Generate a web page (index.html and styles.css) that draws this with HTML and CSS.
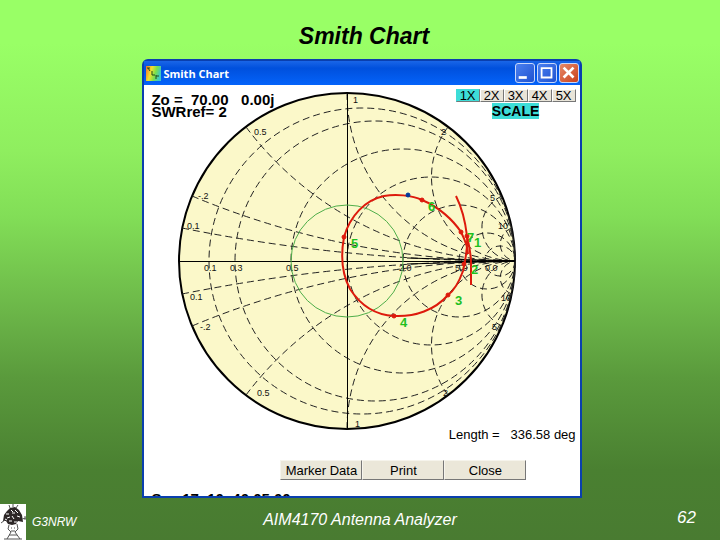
FILE: index.html
```
<!DOCTYPE html>
<html lang="en">

<head>
    <meta charset="UTF-8">
    <meta name="viewport" content="width=device-width, initial-scale=1.0">
    <title>Smith Chart</title>
    <link rel="stylesheet" href="styles.css">
</head>

<body>
    <h1 class="slide-title">Smith Chart</h1>

    <main class="window">
        <header class="titlebar">
            <svg class="app-icon" viewBox="0 0 15 15">
                <defs>
                    <linearGradient id="rainbow" x2="1" y2="0.3">
                        <stop offset="0" stop-color="#f26a2a" />
                        <stop offset="0.4" stop-color="#f2e030" />
                        <stop offset="0.7" stop-color="#7be04a" />
                        <stop offset="1" stop-color="#3fc8c0" />
                    </linearGradient>
                </defs>
                <rect width="15" height="15" fill="url(#rainbow)" />
                <path d="M1 2h3M2 2l2 3M6 5v4h3M10 9v4M10 10h3" fill="none" stroke="#1d4a1d" stroke-width="1" />
            </svg>
            <h2 class="caption">Smith Chart</h2>
            <button class="win-btn" type="button" aria-label="Minimize">
                <svg viewBox="0 0 20 20"><path d="M3 15h9" stroke="#fff" stroke-width="3" /></svg>
            </button>
            <button class="win-btn" type="button" aria-label="Maximize">
                <svg viewBox="0 0 20 20"><path d="M3 4.500h13M4 4v11h11V4" fill="none" stroke="#fff" stroke-width="2" /></svg>
            </button>
            <button class="win-btn close" type="button" aria-label="Close window">
                <svg viewBox="0 0 20 20"><path d="M4 4l11 11M15 4L4 15" stroke="#fff" stroke-width="3" /></svg>
            </button>
        </header>

        <section class="client">
            <div class="readout">
                <p>Zo =&nbsp; 70.00 &nbsp; 0.00j</p>
                <p>SWRref= 2</p>
            </div>

            <div class="scale">
                <div class="scale-btns">
                    <button class="active" type="button">1X</button>
                    <button type="button">2X</button>
                    <button type="button">3X</button>
                    <button type="button">4X</button>
                    <button type="button">5X</button>
                </div>
                <span class="scale-label">SCALE</span>
            </div>

            <svg class="chart" viewBox="0 0 340 340">
                <defs>
                    <clipPath id="disc"><circle cx="170" cy="170" r="168" /></clipPath>
                </defs>
                <circle class="rim" cx="170" cy="170" r="168" />

                <!-- constant resistance: 0.1 0.2 0.5 1 2 5 10 -->
                <g class="grid">
                    <circle cx="185" cy="170" r="153" />
                    <circle cx="198" cy="170" r="140" />
                    <circle cx="226" cy="170" r="112" />
                    <circle cx="254" cy="170" r="84" />
                    <circle cx="282" cy="170" r="56" />
                    <circle cx="310" cy="170" r="28" />
                    <circle cx="323" cy="170" r="15" />
                </g>

                <!-- constant reactance: 0.1 0.2 0.5 1 2 5 10 -->
                <g class="grid" clip-path="url(#disc)">
                    <path d="M5 137A1680 1680 0 0 0 338 170M5 203A1680 1680 0 0 1 338 170" />
                    <path d="M15 105A840 840 0 0 0 338 170M15 235A840 840 0 0 1 338 170" />
                    <path d="M69 36A336 336 0 0 0 338 170M69 304A336 336 0 0 1 338 170" />
                    <path d="M170 2A168 168 0 0 0 338 170M170 338A168 168 0 0 1 338 170" />
                    <path d="M271 36A84 84 0 0 0 338 170M271 304A84 84 0 0 1 338 170" />
                    <path d="M325 105A34 34 0 0 0 338 170M325 235A34 34 0 0 1 338 170" />
                    <path d="M335 137A17 17 0 0 0 338 170M335 203A17 17 0 0 1 338 170" />
                </g>
                <path class="axis" d="M2 170.500H338M170.500 2V338" />
                <path class="crowd" d="M230 167L338 170L230 173M284 170H338" />

                <g class="tick">
                    <text x="176" y="12">1</text>
                    <text x="178" y="336">1</text>
                    <text x="77" y="44">0.5</text>
                    <text x="80" y="305">0.5</text>
                    <text x="21" y="108">-.2</text>
                    <text x="23" y="239">-.2</text>
                    <text x="10" y="138">0.1</text>
                    <text x="13" y="209">0.1</text>
                    <text x="27" y="180">0.1</text>
                    <text x="53" y="180">0.3</text>
                    <text x="109" y="180">0.5</text>
                    <text x="222" y="180">2.0</text>
                    <text x="278" y="180">5.0</text>
                    <text x="308" y="180">0.0</text>
                    <text x="264" y="44">2</text>
                    <text x="266" y="305">2</text>
                    <text x="313" y="110">5</text>
                    <text x="315" y="239">5</text>
                    <text x="321" y="138">10</text>
                    <text x="324" y="210">10</text>
                </g>

                <circle class="swr" cx="170" cy="170" r="56" />

                <path class="trace" d="M279 105C284 115 288 128 290 145C292 154 294 162 294 172V194" />
                <path class="trace" d="M290 145C291 158 288 171 286 180C282 191 278 199 271 204C258 219 238 226 217 225C198 224 184 215 173 198C166 185 163 168 167 146C173 125 188 109 207 105C218 103 235 104 245 109C262 116 276 129 284 141C287 147 291 155 291 163" />
                <g class="dots">
                    <circle cx="167" cy="146" r="2" />
                    <circle cx="245" cy="109" r="2" />
                    <circle cx="284" cy="141" r="2" />
                    <circle cx="290" cy="145" r="2" />
                    <circle cx="287" cy="173" r="2" />
                    <circle cx="271" cy="204" r="2" />
                    <circle cx="217" cy="225" r="2" />
                </g>
                <circle class="cursor" cx="231" cy="104" r="2" />

                <g class="marker">
                    <text x="297" y="156">1</text>
                    <text x="294" y="183">2</text>
                    <text x="278" y="214">3</text>
                    <text x="223" y="236">4</text>
                    <text x="174" y="157">5</text>
                    <text x="251" y="120">6</text>
                    <text x="290" y="151">7</text>
                </g>
            </svg>

            <p class="length">Length =&nbsp;&nbsp; 336.58 deg</p>

            <div class="actions">
                <button type="button">Marker Data</button>
                <button type="button">Print</button>
                <button type="button">Close</button>
            </div>

            <p class="status">Sa &nbsp; 17 &nbsp;10 &nbsp;40 05 00</p>
        </section>
    </main>

    <footer class="slide-footer">
        <div class="author">
            <svg class="logo" viewBox="0 0 26 36">
                <rect width="26" height="36" fill="#fff" />
                <path d="M3 17l1-6 3-4 3-3 5-1 4 3 3 5 1 7-5-1-2 3-4 1-4-1-2-3z" fill="#2c2626" />
                <path d="M6 10h3M11 6l2 2M15 6l3 3M7 14l3-1M12 12l2 3M17 12l3 1M9 17h3M14 18h3M5 15l2 1M12 9h3" stroke="#fff" stroke-width="1" />
                <path d="M9 1l1 3M13 0v3M18 1l-2 3M1 19l4-3M22 15l4-1M25 12v4M9 21l-1 4 3 3-4 7M17 20l1 5-3 3 5 7M11 24h1M14 24h1M11 27h4M9 31h8M4 35h18" fill="none" stroke="#555" stroke-width="1" />
            </svg>
            <span>G3NRW</span>
        </div>
        <span class="deck">AIM4170 Antenna Analyzer</span>
        <span class="page">62</span>
    </footer>
</body>

</html>
```
FILE: styles.css
```
* {
    margin: 0;
    padding: 0;
    box-sizing: border-box;
}

body {
    display: flex;
    flex-direction: column;
    align-items: center;
    min-height: 100vh;
    background: linear-gradient(#99ff66, #99ff66 8%, #8fee5f 28%, #82de57 40%, #6bb548 58%, #5a9a3c 70%, #4a8031 87%, #497b31);
    font-family: "Liberation Sans", Arial, sans-serif;
}

button {
    font-family: inherit;
    color: #000;
}

.slide-title {
    padding: 23px 0 9px 8px;
    font-size: 23px;
    line-height: 27px;
    font-style: italic;
}

.window {
    width: 61%;
    margin-left: 4px;
    border: 2px solid #0a3fae;
    border-radius: 6px 6px 0 0;
    background: #fff;
}

.titlebar {
    display: flex;
    align-items: center;
    gap: 2px;
    height: 24px;
    padding: 0 1px 0 2px;
    background: linear-gradient(#1a66e8, #0050dd 30%, #0463fa);
}

.app-icon {
    width: 15px;
    height: 15px;
}

.caption {
    flex: 1;
    font-family: "Open Sans", sans-serif;
    font-size: 11px;
    color: #fff;
}

.win-btn {
    width: 20px;
    height: 20px;
    border: 1px solid #c8d8fa;
    border-radius: 3px;
    background: linear-gradient(135deg, #4a80f0, #1f52d0);
}

.win-btn.close {
    background: linear-gradient(135deg, #e88a68, #c8401c);
}

.win-btn svg {
    display: block;
}

.client {
    display: grid;
    grid-template-columns: 1fr auto;
    padding: 4px 4px 0 7px;
}

.readout {
    grid-area: 1 / 1;
    padding-top: 5px;
    font-size: 15px;
    line-height: 12px;
    font-weight: bold;
    z-index: 1;
}

.scale {
    grid-area: 1 / 2;
    text-align: center;
    z-index: 1;
}

.scale-btns {
    display: flex;
}

.scale-btns button {
    width: 24px;
    height: 13px;
    border: 1px solid;
    border-color: #fff #777 #777 #fff;
    background: #e8e4d8;
    font-size: 13px;
    line-height: 11px;
}

.scale-btns .active {
    border-left-color: #3dddd8;
    border-top-color: #3dddd8;
    background: #3dddd8;
}

.scale-label {
    display: inline-block;
    background: #3dddd8;
    font-size: 14px;
    line-height: 16px;
    font-weight: bold;
}

.chart {
    grid-area: 1 / 1 / 2 / 3;
    justify-self: center;
    width: 340px;
    height: 340px;
    margin: 2px 34px 0 0;
}

.rim {
    fill: #fbf8c9;
    stroke: #000;
    stroke-width: 2;
}

.grid {
    fill: none;
    stroke: #222;
    stroke-width: 1;
    stroke-dasharray: 7 4;
}

.axis,
.crowd {
    fill: none;
    stroke: #000;
    stroke-width: 1;
}

.tick {
    font-size: 9px;
    fill: #111;
}

.swr {
    fill: none;
    stroke: #4fae4a;
    stroke-width: 1;
}

.trace {
    fill: none;
    stroke: #dd1a0c;
    stroke-width: 2;
}

.dots {
    fill: #dd1a0c;
    stroke: #dd1a0c;
}

.cursor {
    fill: #003a9c;
    stroke: #003a9c;
}

.marker {
    font-size: 13px;
    font-weight: bold;
    fill: #1fc01f;
}

.length {
    grid-column: 1 / 3;
    justify-self: end;
    margin-top: -4px;
    font-size: 13px;
    line-height: 16px;
}

.actions {
    grid-column: 1 / 3;
    display: flex;
    width: 246px;
    margin: 17px 0 0 129px;
}

.actions button {
    flex: 1;
    height: 20px;
    border: 1px solid;
    border-color: #f6f4ec #777 #777 #f6f4ec;
    background: #ebe7d9;
    font-size: 13px;
}

/* only the tops of the letters show above the window edge */
.status {
    grid-column: 1 / 3;
    height: 5px;
    margin-top: 11px;
    overflow: hidden;
    font-size: 15px;
    line-height: 16px;
    font-weight: bold;
}

.slide-footer {
    display: grid;
    grid-template-columns: 1fr auto 1fr;
    align-items: center;
    width: 100%;
    height: 36px;
    margin-top: auto;
    color: #fff;
    font-style: italic;
}

.author {
    display: flex;
    align-items: center;
    gap: 6px;
    font-size: 12px;
}

.logo {
    width: 26px;
    height: 36px;
}

.deck {
    padding-bottom: 4px;
    font-size: 16px;
}

.page {
    justify-self: end;
    padding: 0 24px 8px 0;
    font-size: 17px;
}
```
